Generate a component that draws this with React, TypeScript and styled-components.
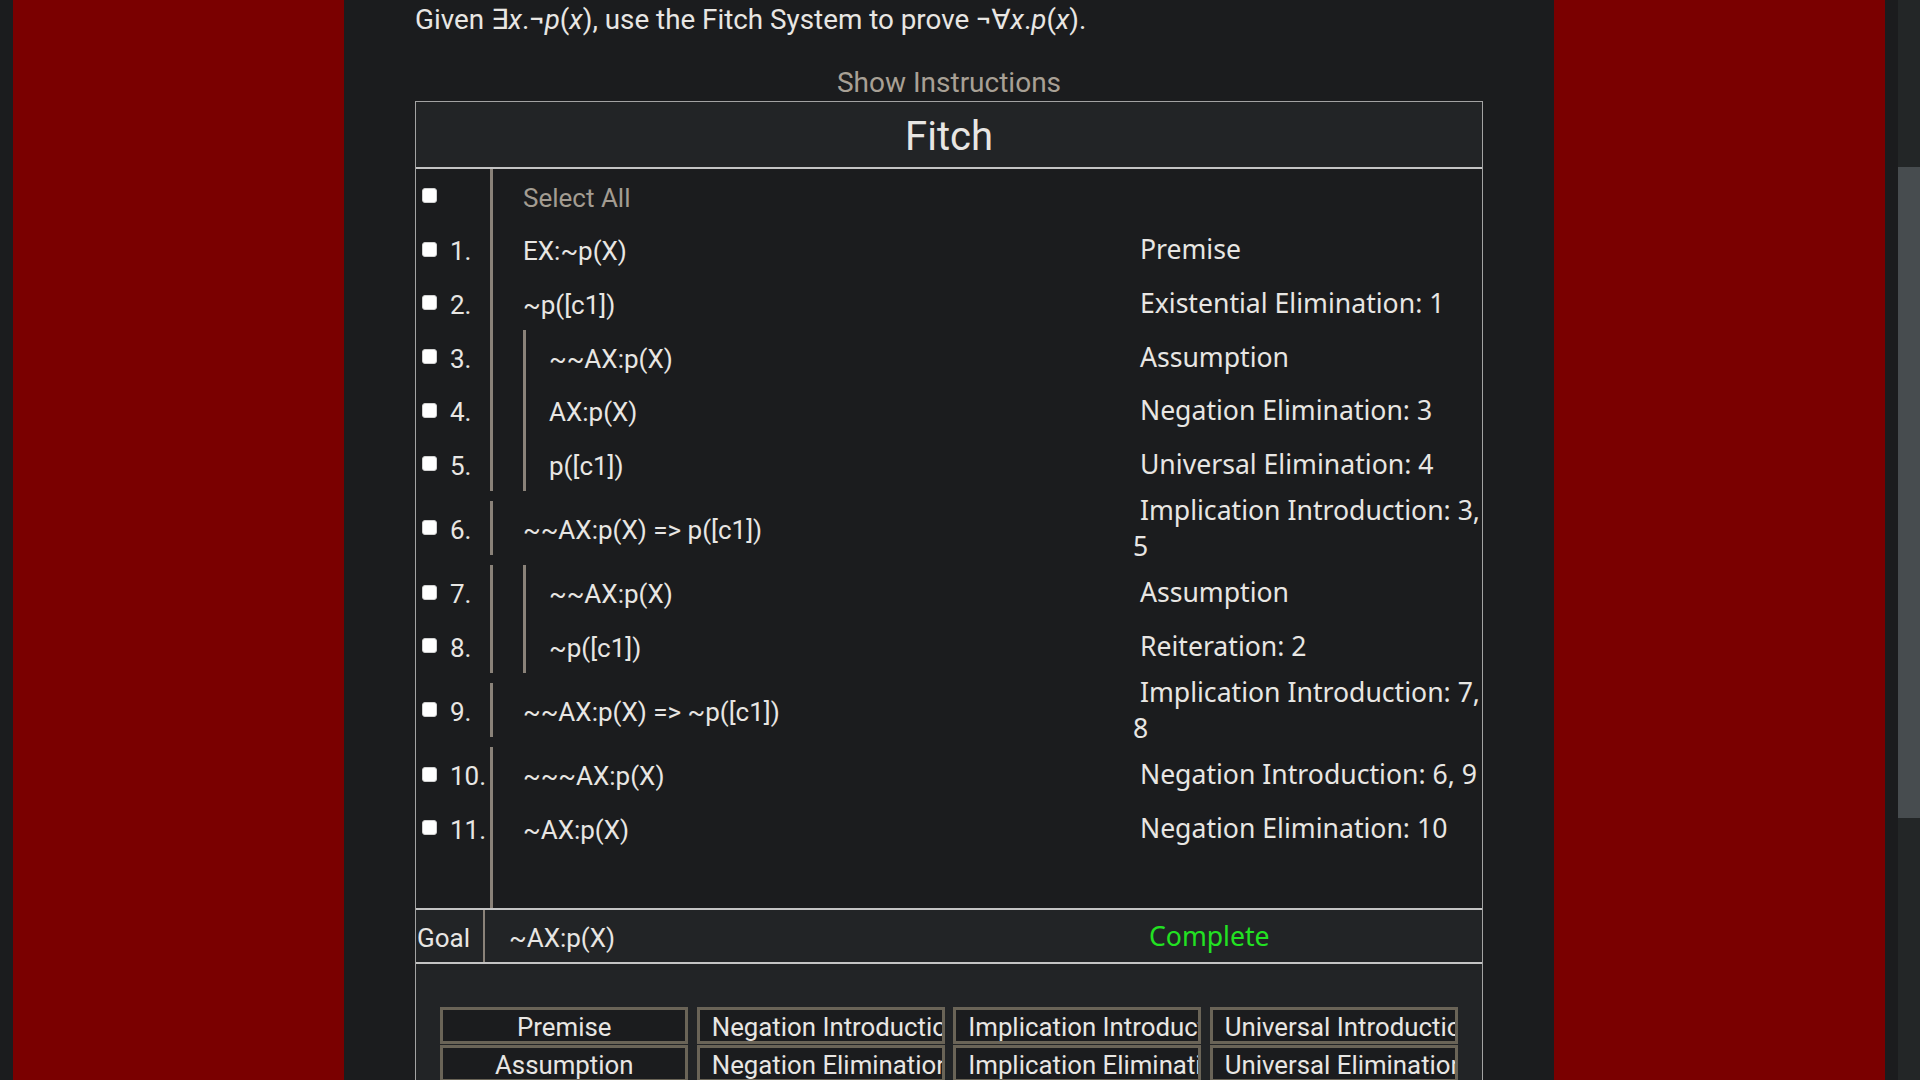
import styled, { createGlobalStyle } from "styled-components";

const GlobalStyle = createGlobalStyle`
  html,
  body {
    margin: 0;
    padding: 0;
    height: 100%;
    overflow: hidden;
    background-color: #1b1c1e;
  }

  body {
    font-family: Roboto, "Noto Sans", "DejaVu Sans", sans-serif;
    color: #e8e6e3;
  }

  * {
    box-sizing: border-box;
  }
`;

const Page = styled.div`
  display: grid;
  grid-template-columns: 13px 331px 1210px 331px 13px 22px;
  height: 1080px;
  overflow: hidden;
`;

const Gutter = styled.div`
  background-color: #1b1c1e;
`;

const Curtain = styled.div`
  background-color: #7a0000;
`;

const Main = styled.main`
  padding: 2px 71px 0;
  background-color: #1b1c1e;
`;

const ScrollTrack = styled.div`
  padding-top: 167px;
  background-color: #232627;
`;

const ScrollThumb = styled.div`
  height: 651px;
  background-color: #474c4f;
`;

const Prompt = styled.p`
  margin: 0;
  font-size: 27.8px;
  line-height: 36px;
`;

const ShowToggle = styled.div`
  margin: 27px 0 0;
  font-size: 28px;
  line-height: 36px;
  text-align: center;
  color: #a8a095;
  cursor: pointer;
`;

const Proof = styled.section`
  border: 1px solid #a3a3a3;
  background-color: #1b1c1e;
`;

const ProofHeader = styled.div`
  display: flex;
  align-items: center;
  justify-content: center;
  height: 67px;
  padding-top: 4px;
  font-size: 40px;
  background-color: #222426;
  border-bottom: 2px solid #c4c4c4;
`;

const ProofBody = styled.div`
  display: flex;
  flex-direction: column;
  gap: 10.6px;
`;

const Block = styled.div`
  display: flex;
  flex-direction: column;
`;

const Row = styled.div`
  display: grid;
  grid-template-columns: 74px 643px 1fr;
  grid-template-rows: 53.6px;
  height: 53.6px;
  font-size: 26px;
`;

const Marker = styled.label`
  display: flex;
  align-items: center;
  gap: 13px;
  padding-left: 6px;
`;

const Check = styled.input.attrs({ type: "checkbox" })`
  appearance: none;
  flex: none;
  width: 15px;
  height: 15px;
  margin: 0;
  background-color: #ffffff;
  border: 1px solid #d0d0d0;
  border-radius: 3px;
`;

const Expr = styled.span`
  padding-top: 4px;
  white-space: nowrap;
`;

const Formula = styled.div<{ $muted?: boolean }>`
  display: flex;
  align-items: center;
  padding-left: 30px;
  border-left: 3px solid #8a8279;
  color: ${(props) => (props.$muted ? "#a39c92" : "#e8e6e3")};
`;

const Subproof = styled.div`
  display: flex;
  align-items: center;
  align-self: stretch;
  padding-left: 23px;
  border-left: 3px solid #8a8279;
`;

const Reason = styled.div`
  display: flex;
  align-items: center;
  height: 53.6px;
  font-family: "Noto Sans", "Open Sans", sans-serif;
  font-size: 26.6px;
`;

const GoalRow = styled.div`
  display: grid;
  grid-template-columns: 69px 1fr 333px;
  align-items: center;
  height: 56px;
  font-size: 26px;
  background-color: #222426;
  border-top: 2px solid #c4c4c4;
  border-bottom: 2px solid #c4c4c4;
`;

const GoalLabel = styled.div`
  display: flex;
  align-items: center;
  height: 100%;
  padding: 4px 0 0 1px;
  border-right: 2px solid #8a8279;
`;

const GoalFormula = styled.div`
  padding: 4px 0 0 24px;
`;

const Status = styled.div`
  font-family: "Noto Sans", "Open Sans", sans-serif;
  font-size: 26.6px;
  color: #22e222;
`;

const RuleGrid = styled.div`
  display: grid;
  grid-template-columns: repeat(4, 248px);
  justify-content: center;
  column-gap: 8.5px;
  row-gap: 1px;
  padding: 43px 0 24px;
  background-color: #222426;
`;

const RuleButton = styled.div`
  height: 37px;
  padding: 1px 12px 0;
  overflow: hidden;
  font-size: 25.8px;
  line-height: 32px;
  text-align: center;
  white-space: nowrap;
  color: #e8e6e3;
  background-color: #1b1c1e;
  border: 3px solid #6a6457;
  cursor: pointer;
`;

type Line = {
  n: string;
  formula: string;
  reason: string;
  depth: number;
};

const blocks: Line[][] = [
  [
    { n: "1.", formula: "EX:~p(X)", reason: "Premise", depth: 0 },
    { n: "2.", formula: "~p([c1])", reason: "Existential Elimination: 1", depth: 0 },
    { n: "3.", formula: "~~AX:p(X)", reason: "Assumption", depth: 1 },
    { n: "4.", formula: "AX:p(X)", reason: "Negation Elimination: 3", depth: 1 },
    { n: "5.", formula: "p([c1])", reason: "Universal Elimination: 4", depth: 1 },
  ],
  [
    { n: "6.", formula: "~~AX:p(X) => p([c1])", reason: "Implication Introduction: 3, 5", depth: 0 },
  ],
  [
    { n: "7.", formula: "~~AX:p(X)", reason: "Assumption", depth: 1 },
    { n: "8.", formula: "~p([c1])", reason: "Reiteration: 2", depth: 1 },
  ],
  [
    { n: "9.", formula: "~~AX:p(X) => ~p([c1])", reason: "Implication Introduction: 7, 8", depth: 0 },
  ],
  [
    { n: "10.", formula: "~~~AX:p(X)", reason: "Negation Introduction: 6, 9", depth: 0 },
    { n: "11.", formula: "~AX:p(X)", reason: "Negation Elimination: 10", depth: 0 },
  ],
];

const rules = [
  "Premise",
  "Negation Introduction",
  "Implication Introduction",
  "Universal Introduction",
  "Assumption",
  "Negation Elimination",
  "Implication Elimination",
  "Universal Elimination",
];

const ProofLine = ({ line }: { line: Line }) => (
  <Row>
    <Marker>
      <Check />
      <Expr>{line.n}</Expr>
    </Marker>
    <Formula>
      {line.depth > 0 ? (
        <Subproof>
          <Expr>{line.formula}</Expr>
        </Subproof>
      ) : (
        <Expr>{line.formula}</Expr>
      )}
    </Formula>
    <Reason>{"\u00a0" + line.reason}</Reason>
  </Row>
);

export default function App() {
  return (
    <>
      <GlobalStyle />
      <Page>
        <Gutter />
        <Curtain />
        <Main>
          <Prompt>
            Given ∃<i>x</i>.¬<i>p</i>(<i>x</i>), use the Fitch System to prove ¬∀
            <i>x</i>.<i>p</i>(<i>x</i>).
          </Prompt>
          <ShowToggle>Show Instructions</ShowToggle>
          <Proof>
            <ProofHeader>Fitch</ProofHeader>
            <ProofBody>
              {blocks.map((block, i) => (
                <Block key={i}>
                  {i === 0 && (
                    <Row>
                      <Marker>
                        <Check />
                      </Marker>
                      <Formula $muted>
                        <Expr>Select All</Expr>
                      </Formula>
                      <Reason />
                    </Row>
                  )}
                  {block.map((line) => (
                    <ProofLine key={line.n} line={line} />
                  ))}
                  {i === blocks.length - 1 && (
                    <Row>
                      <Marker />
                      <Formula />
                      <Reason />
                    </Row>
                  )}
                </Block>
              ))}
            </ProofBody>
            <GoalRow>
              <GoalLabel>Goal</GoalLabel>
              <GoalFormula>~AX:p(X)</GoalFormula>
              <Status>Complete</Status>
            </GoalRow>
            <RuleGrid>
              {rules.map((rule) => (
                <RuleButton key={rule}>{rule}</RuleButton>
              ))}
            </RuleGrid>
          </Proof>
        </Main>
        <Curtain />
        <Gutter />
        <ScrollTrack>
          <ScrollThumb />
        </ScrollTrack>
      </Page>
    </>
  );
}
